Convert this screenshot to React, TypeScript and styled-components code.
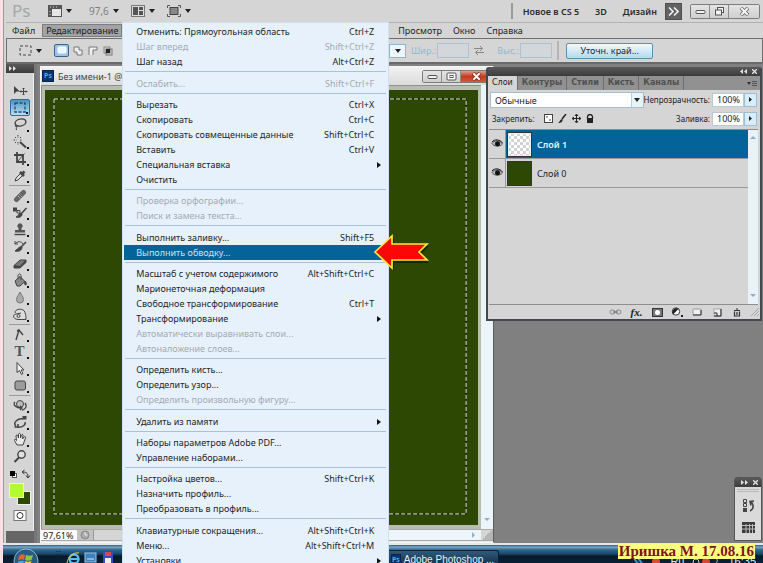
import React from 'react';
import styled, { createGlobalStyle, css } from 'styled-components';

const ui = '"Noto Sans", "DejaVu Sans Condensed", sans-serif';
const face = '#d5d5d5';
const green = '#2d4803';
const blue = '#046499';

const GlobalStyle = createGlobalStyle`
  * { box-sizing: border-box; }
  body { margin: 0; background: #fadfe5; }
  button, input, select { font: inherit; color: inherit; margin: 0; padding: 0; border: 0; background: none; border-radius: 0; }
  svg { display: block; flex: none; }
`;

const Page = styled.div`
  position: relative;
  display: flex;
  flex-direction: column;
  height: 100vh;
  padding-left: 3px;
  overflow: hidden;
  font: 9px/15px ${ui};
  color: #1c1c1c;
`;

const AppWindow = styled.div`
  flex: 1;
  min-height: 0;
  display: flex;
  flex-direction: column;
  border-left: 1px solid #9b9b9b;
  padding-left: 2px;
  background: ${face};
`;

/* ---------- application bar ---------- */

const AppBar = styled.header`
  flex: none;
  height: 23px;
  display: flex;
  align-items: center;
  justify-content: space-between;
  border-bottom: 1px solid #b2b2b2;
  padding: 0 3px 0 6px;
`;

const AppTools = styled.div`
  display: flex;
  align-items: center;
  gap: 12px;
`;

const Logo = styled.span`
  width: 24px;
  font: 17px/20px ${ui};
  color: #a6a6a6;
`;

const DropButton = styled.button`
  display: flex;
  align-items: center;
  gap: 4px;
  color: #808080;
  &::after {
    content: '';
    border: 3px solid transparent;
    border-top: 4px solid #222;
    border-bottom: 0;
  }
`;

const ZoomDrop = styled(DropButton)`
  margin-left: 5px;
  font-size: 10px;
`;

const Workspaces = styled.div`
  display: flex;
  align-items: center;
  height: 16px;
  border-left: 2px solid #9c9c9c;
  padding-left: 10px;
  gap: 16px;
`;

const WorkspaceButton = styled.button`
  font-weight: 600;
  color: #2b2b2b;
`;

const AppRight = styled.div`
  display: flex;
  align-items: center;
  gap: 8px;
`;

const MoreButton = styled.button`
  display: grid;
  place-items: center;
  width: 17px;
  height: 17px;
  background: #626262;
  border: 1px solid #4e4e4e;
`;

const WindowButtons = styled.div<{ $doc?: boolean }>`
  display: flex;
  height: ${p => (p.$doc ? 13 : 15)}px;
  border: 1px solid #7c7c7c;
  border-radius: 2px;
`;

const WindowButton = styled.button<{ $w: number; $close?: boolean }>`
  width: ${p => p.$w}px;
  display: grid;
  place-items: center;
  background: linear-gradient(#e4e4e4, #cfcfcf);
  & + & { border-left: 1px solid #8c8c8c; }
  ${p => p.$close && css`background: linear-gradient(#e39b8d, #c83a24 50%, #d7553b);`}
`;

/* ---------- menu bar ---------- */

const MenuBar = styled.nav`
  flex: none;
  display: flex;
  align-items: center;
  height: 15px;
  padding-left: 6px;
`;

const MenuButton = styled.button<{ $open?: boolean }>`
  line-height: 13px;
  ${p => p.$open && css`
    height: 13px;
    width: 80px;
    line-height: 11px;
    background: #a3a3a3;
    border: 1px solid #7d7d7d;
  `}
`;

const OpenMenu = styled.div`
  position: relative;
  margin-left: 7px;
`;

const MenuRest = styled.div`
  display: flex;
  gap: 11px;
  margin-left: 276px;
`;

const Menu = styled.ul`
  position: absolute;
  z-index: 5;
  left: 100%;
  top: -1px;
  width: 267px;
  margin: 0;
  padding: 1px 1px 12px;
  list-style: none;
  background: #e7f1fb;
  border: 1px solid #cfe2ef;
`;

const MenuRow = styled.li`
  position: relative;
`;

const MenuSeparator = styled.li<{ $wide?: boolean }>`
  height: ${p => (p.$wide ? 7 : 6)}px;
  padding-top: 2px;
  margin: 0 1px;
  &::before {
    content: '';
    display: block;
    border-top: 1px solid #a8c4d2;
  }
`;

const MenuItem = styled.button<{ $active?: boolean }>`
  display: flex;
  align-items: center;
  justify-content: space-between;
  width: 100%;
  height: 15px;
  padding: 0 13px 0 12px;
  line-height: 15px;
  color: #1d242b;
  white-space: nowrap;
  &:disabled { color: #a3abb3; }
  ${p => p.$active && css`
    background: ${blue};
    color: #c9e2f2;
  `}
`;

const SubmenuMark = styled.span`
  margin-right: -7px;
  border: 3px solid transparent;
  border-left: 4px solid #111;
  border-right: 0;
`;

const Pointer = styled.svg`
  position: absolute;
  z-index: 6;
  top: -11px;
  right: -43px;
  overflow: visible;
`;

/* ---------- options bar ---------- */

const OptionsBar = styled.div`
  flex: none;
  display: flex;
  align-items: center;
  height: 26px;
  border: 1px solid #6f6f6f;
  border-bottom: 2px solid #6a6a6a;
  padding: 0 12px;
`;

const ShapeModes = styled.div`
  display: flex;
  align-items: center;
  gap: 2px;
  margin-left: 12px;
`;

const ModeButton = styled.button<{ $on?: boolean }>`
  display: grid;
  place-items: center;
  width: 13px;
  height: 13px;
  ${p => p.$on && css`
    width: 15px;
    background: #9cc6e4;
    border: 1px solid #39658c;
    border-radius: 2px;
  `}
`;

const SizeOptions = styled.div`
  display: flex;
  align-items: center;
  margin-left: 275px;
  gap: 5px;
  color: #93b7d0;
`;

const StyleButton = styled.button`
  width: 17px;
  height: 14px;
  display: grid;
  place-items: center;
  background: #eef7fc;
  border: 1px solid #8db6cf;
`;

const SizeLabel = styled.label`
  display: flex;
  align-items: center;
  gap: 1px;
`;

const SizeInput = styled.input`
  width: 32px;
  height: 15px;
  border: 1px solid #a9c3d3;
  background: #d3d7da;
`;

const SwapButton = styled.button`
  margin-right: 8px;
`;

const RefineButton = styled.button`
  width: 87px;
  height: 16px;
  margin-left: 2px;
  line-height: 13px;
  color: #1c2730;
  background: linear-gradient(#f3fafd, #d3e9f5 50%, #b5d9ec);
  border: 1px solid #5c90af;
  border-radius: 2px;
`;

const OptionDivider = styled.span`
  width: 2px;
  height: 19px;
  background: #b4b4b4;
`;

/* ---------- workspace ---------- */

const Workspace = styled.main`
  position: relative;
  flex: 1;
  min-height: 0;
  display: flex;
  background: #808080;
`;

const ToolColumn = styled.aside`
  flex: none;
  width: 31px;
  display: flex;
  flex-direction: column;
  background: #666;
  border-right: 3px solid #777;
`;

const DarkHeader = styled.div<{ $end?: boolean }>`
  flex: none;
  display: flex;
  align-items: center;
  justify-content: ${p => (p.$end ? 'flex-end' : 'flex-start')};
  gap: 5px;
  height: 9px;
  padding: 0 3px;
  background: linear-gradient(#5a5a5a, #3b3b3b);
`;

const ToolList = styled.div`
  display: flex;
  flex-direction: column;
  align-items: center;
  padding: 9px 3px 7px;
  background: ${face};
  border-right: 1px solid #efefef;
`;

const ToolButton = styled.button<{ $on?: boolean }>`
  position: relative;
  display: grid;
  place-items: center;
  width: 20px;
  height: 17px;
  border-radius: 2px;
  color: #444;
  ${p => p.$on && css`
    background: linear-gradient(#4f93c4, #b9def2);
    border: 1px solid #2f6c9c;
  `}
`;

const Corner = styled.i`
  position: absolute;
  right: 1px;
  bottom: 1px;
  width: 2px;
  height: 2px;
  background: #111;
`;

const ToolDivider = styled.hr`
  width: 21px;
  margin: 1px 0;
  border: 0;
  border-top: 1px solid #9a9a9a;
`;

const DocWindow = styled.section`
  flex: 0 1 60%;
  min-width: 0;
  margin: 2px 0 0 3px;
  display: flex;
  flex-direction: column;
  background: #e6e6e6;
  border: 1px solid #f6f6f6;
  border-right: 1px solid #5c5c5c;
`;

const DocTitle = styled.div`
  flex: none;
  display: flex;
  align-items: center;
  justify-content: space-between;
  height: 18px;
  padding: 0 0 0 1px;
  background: linear-gradient(#f1f1f1, #dcdcdc);
`;

const DocName = styled.div`
  display: flex;
  align-items: center;
  gap: 4px;
  color: #444;
`;

const PsBadge = styled.span`
  display: grid;
  place-items: center;
  width: 12px;
  height: 12px;
  font: 600 7px/10px ${ui};
  color: #5ab4ee;
  background: #07356f;
  border: 1px solid #0a2347;
`;

const DocBody = styled.div`
  flex: 1;
  min-height: 0;
  display: flex;
`;

const CanvasFrame = styled.div`
  flex: 1;
  display: flex;
  padding: 4px 3px 4px;
  background: #b9bdb1;
  border: 1px solid #8f928a;
  border-width: 1px 0 0 1px;
`;

const Canvas = styled.div`
  flex: 1;
  padding: 8px 11px 10px 8px;
  background: ${green};
`;

const Selection = styled.svg`
  width: 100%;
  height: 100%;
`;

const VerticalScroll = styled.div`
  width: 12px;
  display: flex;
  flex-direction: column;
  justify-content: flex-end;
  align-items: center;
  padding-bottom: 6px;
  background: #ecf5fa;
`;

const StatusBar = styled.div`
  flex: none;
  display: flex;
  align-items: stretch;
  height: 12px;
  margin-bottom: 1px;
  background: ${face};
  border: 1px solid #a9a9a9;
  border-width: 1px 0;
`;

const ZoomInput = styled.input`
  width: 36px;
  padding-left: 2px;
  font-size: 9px;
  background: #fff;
`;

const StatusButton = styled.button`
  display: grid;
  place-items: center;
  width: 17px;
  background: #c2c2c2;
  border-right: 1px solid #999;
`;

const HorizontalScroll = styled.div`
  flex: 1;
  display: flex;
  align-items: center;
  justify-content: flex-end;
  padding-right: 4px;
  background: linear-gradient(90deg, ${face} 30%, #ecf5fa 30%);
`;

const Grip = styled.div`
  width: 12px;
  background: linear-gradient(135deg, ${face} 50%, #b5b5b5 50%);
`;

/* ---------- layers panel ---------- */

const LayersPanel = styled.section`
  position: absolute;
  z-index: 2;
  top: 3px;
  right: 1px;
  width: 276px;
  height: 254px;
  display: flex;
  flex-direction: column;
  background: ${face};
  border: 2px solid #42484e;
  border-top: 0;
  border-radius: 3px 3px 0 0;
`;

const Tabs = styled.div`
  flex: none;
  display: flex;
  align-items: stretch;
  height: 14px;
  background: #919191;
`;

const Tab = styled.button<{ $on?: boolean }>`
  padding: 0 4px;
  font: bold 8px/14px "DejaVu Sans", sans-serif;
  color: #505050;
  border-right: 1px solid #6e6e6e;
  ${p => p.$on && css`
    font-weight: normal;
    background: ${face};
    color: #222;
  `}
`;

const PanelMenu = styled.button`
  margin: 0 3px 0 auto;
`;

const PanelRow = styled.div`
  flex: none;
  display: flex;
  align-items: center;
  justify-content: space-between;
  height: 19px;
  padding: 0 3px 0 2px;
  font-size: 8px;
`;

const BlendSelect = styled.div`
  position: relative;
  flex: 0 1 155px;
  height: 16px;
  display: flex;
  background: #fff;
  border: 1px solid #a5bfce;
`;

const SelectBox = styled.select`
  flex: 1;
  min-width: 0;
  appearance: none;
  padding-left: 4px;
  font-size: 9px;
`;

const SelectMark = styled.span`
  display: grid;
  place-items: center;
  width: 12px;
  background: #e6f3fa;
  border-left: 1px solid #b5d0df;
`;

const Percent = styled.label`
  display: flex;
  align-items: center;
  gap: 2px;
  white-space: nowrap;
`;

const PercentInput = styled.input`
  width: 32px;
  height: 14px;
  padding-left: 4px;
  font-size: 9px;
  background: #fff;
  border: 1px solid #b9c9d3;
`;

const PercentButton = styled.button`
  display: grid;
  place-items: center;
  width: 13px;
  height: 14px;
  margin-left: -2px;
  background: #d9edf8;
  border: 1px solid #9cc0d5;
`;

const Locks = styled.div`
  display: flex;
  align-items: center;
  gap: 5px;
  padding-left: 2px;
`;

const LockLabel = styled.span`
  margin-right: 4px;
`;

const LayerArea = styled.div`
  flex: 1;
  display: flex;
  margin: 1px 2px 0 1px;
  border: 1px solid #8d8d8d;
  border-width: 1px 0;
`;

const LayerList = styled.div`
  flex: 1;
`;

const LayerRow = styled.div`
  display: flex;
  align-items: stretch;
  height: 29px;
  border-bottom: 1px solid #999;
  color: #222;
`;

const EyeButton = styled.button`
  display: grid;
  place-items: center;
  width: 17px;
  border-right: 1px solid #999;
`;

const LayerButton = styled.button<{ $on?: boolean }>`
  flex: 1;
  display: flex;
  align-items: center;
  gap: 5px;
  padding-left: 1px;
  ${p => p.$on && css`
    background: ${blue};
    color: #e9f5fc;
    font-weight: 600;
  `}
`;

const Thumb = styled.span<{ $checker?: boolean }>`
  width: 25px;
  height: 25px;
  border: 1px solid #333;
  background: ${green};
  ${p => p.$checker && css`
    background: repeating-conic-gradient(#d3d3d3 0 25%, #fff 0 50%) 0 0 / 6px 6px;
    outline: 1px solid #e8f1f6;
    outline-offset: -2px;
  `}
`;

const LayerScroll = styled.div`
  width: 10px;
  display: flex;
  flex-direction: column;
  justify-content: space-between;
  align-items: center;
  padding: 5px 0;
  background: #e9f2f7;
`;

const PanelFooter = styled.div`
  flex: none;
  display: flex;
  align-items: center;
  justify-content: flex-end;
  gap: 8px;
  height: 14px;
  padding-right: 1px;
`;

const IconButton = styled.button`
  display: grid;
  place-items: center;
  min-width: 12px;
`;

const FxButton = styled(IconButton)`
  width: 13px;
  font: italic bold 11px/12px "Liberation Serif", serif;
`;

/* ---------- collapsed panel ---------- */

const IconDock = styled.aside`
  position: absolute;
  right: 1px;
  bottom: 2px;
  width: 28px;
  display: flex;
  flex-direction: column;
  background: #dadada;
  border: 1px solid #555;
  border-radius: 3px 3px 0 0;
`;

const DockIcons = styled.div`
  display: flex;
  flex-direction: column;
  align-items: center;
  gap: 10px;
  margin: 2px;
  padding: 7px 0 5px;
  border-top: 3px double #b8b8b8;
`;

/* ---------- task bar ---------- */

const TaskBar = styled.footer`
  flex: none;
  display: flex;
  align-items: flex-start;
  height: 20px;
  padding-left: 10px;
  border-top: 2px solid #e5e7e8;
  background: linear-gradient(#2b5876, #7aa8c6 2px, #2f648a 5px, #1c4767 9px, #071a2c 11px, #0a2136);
`;

const StartButton = styled.button`
  width: 26px;
  height: 26px;
  margin-top: 3px;
`;

const QuickLaunch = styled.div`
  display: flex;
  gap: 4px;
  margin: 6px 0 0 16px;
`;

const TaskButton = styled.button`
  display: flex;
  align-items: center;
  gap: 3px;
  width: 113px;
  height: 15px;
  margin: 5px 0 0 272px;
  padding: 4px 4px 0;
  font: 10px/14px "Liberation Sans", sans-serif;
  color: #e4eef5;
  white-space: nowrap;
  background: linear-gradient(#31597a, #12314c);
  border: 1px solid #0b2136;
  border-bottom: 0;
  border-radius: 3px 3px 0 0;
`;

const Tray = styled.div`
  display: flex;
  gap: 7px;
  margin: 9px 7px 0 auto;
  font: 11px/14px "Liberation Sans", sans-serif;
  color: #dfe9f0;
`;

const Caption = styled.p`
  position: absolute;
  z-index: 7;
  right: 8px;
  bottom: 4px;
  margin: 0;
  padding: 0 1px;
  font: bold 15px/15px "Liberation Serif", serif;
  color: #7b1420;
  background: #ffff80;
`;

/* ---------- drawings ---------- */

const Icon = ({ w = 16, h = 15, children }: { w?: number; h?: number; children: React.ReactNode }) => (
  <svg width={w} height={h} viewBox={`0 0 ${w} ${h}`} fill="none" stroke="currentColor" aria-hidden="true">
    {children}
  </svg>
);

const Caret = () => <Icon w={6} h={4}><path d="M0 0h6L3 4z" fill="#222" stroke="none" /></Icon>;
const SideCaret = () => <Icon w={3} h={5}><path d="M0 0l3 2.5L0 5z" fill="#222" stroke="none" /></Icon>;
const Chevron = ({ d }: { d: string }) => <Icon w={6} h={6}><path d={d} fill="#8fb0c6" stroke="none" /></Icon>;
const DoubleArrow = ({ left }: { left?: boolean }) => (
  <Icon w={7} h={5}>
    <path d={left ? 'M3 0v5L0 2.5zM7 0v5L4 2.5z' : 'M0 0v5l3-2.5zM4 0v5l3-2.5z'} fill="#e4e4e4" stroke="none" />
  </Icon>
);
const SmallCross = () => <Icon w={5} h={5}><path d="M0 0l5 5M5 0L0 5" stroke="#e4e4e4" strokeWidth="1.3" /></Icon>;

const MinIcon = () => <Icon w={11} h={7}><rect x="1" y="2.5" width="9" height="3" rx="1" fill="#f2f2f2" stroke="#555" /></Icon>;
const RestoreIcon = () => (
  <Icon w={11} h={9}>
    <rect x="3.5" y=".5" width="6" height="5" fill="#f2f2f2" stroke="#555" />
    <rect x="1.5" y="3" width="6" height="5" fill="#f2f2f2" stroke="#555" />
  </Icon>
);
const MaxIcon = () => (
  <Icon w={11} h={9}>
    <rect x="1" y="1" width="9" height="7" rx="1" fill="#f6f6f6" stroke="#555" />
    <rect x="4" y="3.5" width="3" height="2" stroke="#555" />
  </Icon>
);
const CloseIcon = ({ light }: { light?: boolean }) => (
  <Icon w={11} h={9}>
    <path d="M2 1l7 7M9 1L2 8" stroke={light ? '#7b2a1e' : '#666'} strokeWidth="3.6" />
    <path d="M2.3 1.3l6.4 6.4M8.7 1.3L2.3 7.7" stroke="#f7f7f7" strokeWidth="2" />
  </Icon>
);

const toolIcons: Record<string, React.ReactNode> = {
  'Перемещение': <><path d="M2 3v8l2.500-2.500H8z" fill="currentColor" stroke="none" /><path d="M11.500 5v7M8 8.500h7M10.500 6l1-1 1 1M10.500 11l1 1 1-1M9 7.500l-1 1 1 1M14 7.500l1 1-1 1" /></>,
  'Прямоугольная область': <rect x="3" y="3" width="10" height="9" strokeDasharray="3 1.500" stroke="#1d4d73" strokeWidth="1.300" />,
  'Лассо': <><ellipse cx="8.500" cy="5.500" rx="5.500" ry="3.500" transform="rotate(-12 8.500 5.500)" strokeWidth="1.400" /><path d="M4 8c-2 1 0 2.500 1 1.500S3.500 11 4.500 13" /></>,
  'Волшебная палочка': <><path d="M8 8l6 5.500" strokeWidth="2" /><path d="M6 1v3M6 8v3M1.500 6h3M8 6h2.500M3 3l1.500 1.500M9 3L7.500 4.500M3 9l1.500-1.500" strokeDasharray="1.500 1" /></>,
  'Рамка': <><path d="M5 1v10h9M2 4h9v10" strokeWidth="1.800" /><path d="M5.500 10.500l7-8" /></>,
  'Пипетка': <><path d="M3 13l1-3 5-5 2 2-5 5z" fill="#ddd" /><path d="M8 4l4 4M10 6l2.500-2.500" strokeWidth="2.600" /></>,
  'Восстанавливающая кисть': <><path d="M4.500 11.500l7-7" strokeWidth="5" strokeLinecap="round" stroke="#666" /><path d="M6 8l3 3M7.500 6.500l3 3" stroke="#ccc" strokeDasharray="1 1" /></>,
  'Кисть': <><rect x="1.500" y="3" width="3" height="3" fill="currentColor" /><path d="M5 5.500h3v2.500H5z" /><path d="M9 9l5.500-6" strokeWidth="1.600" /><path d="M4 12c3 1 6 0 6-3-2-1.500-3 0-3.500 1S5 11.500 4 12z" fill="currentColor" /></>,
  'Штамп': <><path d="M6.500 8V6a2.500 2.500 0 1 1 3 0v2H13v2.500H3V8z" fill="#555" stroke="none" /><path d="M2.500 12.500h11" strokeWidth="1.400" /></>,
  'Архивная кисть': <><path d="M3 5c2-3 7-3 8 0M3 2v3h3" /><path d="M9 8l5-5" strokeWidth="1.600" /><path d="M3 12c3 1 7 0 7-4-3-1-4 2-7 4z" fill="currentColor" /></>,
  'Ластик': <><path d="M2 9.500L8 4h6l-5.500 6.500z" fill="#777" /><path d="M2 9.500V12h6l6-5.500V4L8.500 10.500H2" fill="#444" /></>,
  'Заливка': <><path d="M3 8l5-4.500 5 5L8 13H5z" fill="#888" /><path d="M6 6V2.500c0-2 3-2 3 0V7" /><path d="M13 8c2 2 1.500 4 .500 4s-1-2-.500-4z" fill="currentColor" /></>,
  'Размытие': <path d="M8 2c1 3 3.500 4.500 3.500 7.500a3.500 3.500 0 0 1-7 0C4.500 6.500 7 5 8 2z" fill="#aaa" stroke="#777" />,
  'Губка': <><path d="M3 6c0-5 9-5 10-.500 1 3 1 5 1 7H6C1 12 0 8 4 7l5-1" fill="#ddd" /><circle cx="6.500" cy="9" r="1.500" /></>,
  'Перо': <path d="M4 13L7 3l4 5M7 3l-2 1" strokeWidth="1.400" />,
  'Контур': <path d="M5 1.500v10l2.500-2 2 4 1.500-1-2-3.500h3z" fill="#eee" />,
  'Прямоугольник': <rect x="3" y="3" width="10.500" height="9" rx="2" fill="#9c9c9c" />,
  '3D-вращение': <><circle cx="8" cy="6" r="3.500" fill="#bbb" /><path d="M3 4c-3 3 2 6 6 6M13 5c3 4-1 7-3 7M8 8l2 2-2 2" strokeWidth="1.300" /></>,
  '3D-камера': <><path d="M4 11C0 8 6 3 11 4M5 12c5 1 9-2 8-5M2.500 12H6V9" strokeWidth="1.500" /><rect x="11" y="1.500" width="3" height="2.500" fill="currentColor" /></>,
  'Рука': <path d="M5 13L2.500 8.500c-.500-1.500 1-1.500 2 0L4 4c0-1.500 1.500-1.500 2 0l.5 2V2.500c0-1.500 1.700-1.500 2 0V6l1-3c.5-1 2-.700 1.500 1L10.500 7l1.500-2c1-1 2 0 1.500 1L11 13z" fill="#e8e8e8" />,
  'Масштаб': <><circle cx="9.500" cy="5.500" r="3.700" fill="#e0e0e0" strokeWidth="1.400" /><path d="M7 8.500L2.500 13" strokeWidth="2" /></>,
};

const ToolLetter = styled.span`
  font: bold 15px/17px "Liberation Serif", serif;
  color: #555;
`;

const toolGroups: string[][] = [
  ['Перемещение', 'Прямоугольная область', 'Лассо', 'Волшебная палочка', 'Рамка', 'Пипетка'],
  ['Восстанавливающая кисть', 'Кисть', 'Штамп', 'Архивная кисть', 'Ластик', 'Заливка', 'Размытие', 'Губка'],
  ['Перо', 'Текст', 'Контур', 'Прямоугольник'],
  ['3D-вращение', '3D-камера', 'Рука', 'Масштаб'],
];

type Entry = { text: string; keys?: string; off?: boolean; sub?: boolean; active?: boolean };

const menuGroups: Entry[][] = [
  [
    { text: 'Отменить: Прямоугольная область', keys: 'Ctrl+Z' },
    { text: 'Шаг вперед', keys: 'Shift+Ctrl+Z', off: true },
    { text: 'Шаг назад', keys: 'Alt+Ctrl+Z' },
  ],
  [{ text: 'Ослабить...', keys: 'Shift+Ctrl+F', off: true }],
  [
    { text: 'Вырезать', keys: 'Ctrl+X' },
    { text: 'Скопировать', keys: 'Ctrl+C' },
    { text: 'Скопировать совмещенные данные', keys: 'Shift+Ctrl+C' },
    { text: 'Вставить', keys: 'Ctrl+V' },
    { text: 'Специальная вставка', sub: true },
    { text: 'Очистить' },
  ],
  [
    { text: 'Проверка орфографии...', off: true },
    { text: 'Поиск и замена текста...', off: true },
  ],
  [
    { text: 'Выполнить заливку...', keys: 'Shift+F5' },
    { text: 'Выполнить обводку...', active: true },
  ],
  [
    { text: 'Масштаб с учетом содержимого', keys: 'Alt+Shift+Ctrl+C' },
    { text: 'Марионеточная деформация' },
    { text: 'Свободное трансформирование', keys: 'Ctrl+T' },
    { text: 'Трансформирование', sub: true },
    { text: 'Автоматически выравнивать слои...', off: true },
    { text: 'Автоналожение слоев...', off: true },
  ],
  [
    { text: 'Определить кисть...' },
    { text: 'Определить узор...' },
    { text: 'Определить произвольную фигуру...', off: true },
  ],
  [{ text: 'Удалить из памяти', sub: true }],
  [{ text: 'Наборы параметров Adobe PDF...' }, { text: 'Управление наборами...' }],
  [
    { text: 'Настройка цветов...', keys: 'Shift+Ctrl+K' },
    { text: 'Назначить профиль...' },
    { text: 'Преобразовать в профиль...' },
  ],
  [
    { text: 'Клавиатурные сокращения...', keys: 'Alt+Shift+Ctrl+K' },
    { text: 'Меню...', keys: 'Alt+Shift+Ctrl+M' },
    { text: 'Установки', sub: true },
  ],
];

const EditMenu = () => (
  <Menu role="menu">
    {menuGroups.map((group, g) => (
      <React.Fragment key={g}>
        {g > 0 && <MenuSeparator role="separator" $wide={g % 3 === 1} />}
        {group.map(item => (
          <MenuRow key={item.text} role="none">
            <MenuItem role="menuitem" disabled={item.off} $active={item.active}>
              <span>{item.text}</span>
              {item.keys && <span>{item.keys}</span>}
              {item.sub && <SubmenuMark />}
            </MenuItem>
            {item.active && (
              <Pointer width="56" height="36" viewBox="0 0 56 36" aria-hidden="true">
                <path d="M3 20L20 4v8h35l-8 8 8 9H20v8z" fill="#000" opacity=".45" />
                <path d="M1 18L18 2v8h35l-8 8 8 8H18v8z" fill="#fb0707" stroke="#ffe934" strokeWidth="1.700" />
              </Pointer>
            )}
          </MenuRow>
        ))}
      </React.Fragment>
    ))}
  </Menu>
);

const Tools = () => (
  <ToolColumn>
    <DarkHeader><DoubleArrow /></DarkHeader>
    <ToolList>
      {toolGroups.map((group, g) => (
        <React.Fragment key={g}>
          {g > 0 && <ToolDivider />}
          {group.map(name => (
            <ToolButton key={name} aria-label={name} $on={name === 'Прямоугольная область'}>
              {name === 'Текст' ? <ToolLetter>T</ToolLetter> : <Icon>{toolIcons[name]}</Icon>}
              {name !== 'Перемещение' && name !== 'Масштаб' && <Corner />}
            </ToolButton>
          ))}
        </React.Fragment>
      ))}
      <Icon w={22} h={42}>
        <rect x="3.500" y="8.500" width="4" height="4" fill="#fff" stroke="#555" />
        <rect x="1" y="6" width="5" height="5" fill="#000" stroke="none" />
        <path d="M14 7c4 0 5 2 5 5M15.500 5L13 7l2.500 2M17 10.500l2 2.500 2-2.500" stroke="#333" />
        <rect x="8.500" y="26.500" width="13" height="13" fill={green} stroke="#f0f0f0" />
        <rect x=".5" y="18.500" width="14" height="14" fill="#b2fb33" stroke="#f0f0f0" />
      </Icon>
      <ToolButton aria-label="Быстрая маска">
        <Icon w={14} h={11}>
          <rect x="1" y=".5" width="12" height="10" fill="#fafafa" stroke="#777" />
          <circle cx="7" cy="5.500" r="3" fill="#fff" stroke="#333" />
        </Icon>
      </ToolButton>
    </ToolList>
  </ToolColumn>
);

const PercentField = ({ id, label }: { id: string; label: string }) => (
  <Percent htmlFor={id}>
    {label}
    <PercentInput id={id} defaultValue="100%" />
    <PercentButton aria-label={label}><SideCaret /></PercentButton>
  </Percent>
);

const Eye = () => (
  <Icon w={12} h={10}>
    <path d="M1 4.500C3 1 9 .500 11.500 5 9 8 3 8 1 4.500z" fill="#bbb" stroke="#555" />
    <circle cx="6.500" cy="4.700" r="2.500" fill="#111" stroke="none" />
    <path d="M1 3c2-3 8-3 10.500 1" stroke="#222" />
  </Icon>
);

const Layers = () => (
  <LayersPanel>
    <DarkHeader $end><DoubleArrow left /><SmallCross /></DarkHeader>
    <Tabs>
      {['Слои', 'Контуры', 'Стили', 'Кисть', 'Каналы'].map((t, i) => <Tab key={t} $on={i === 0}>{t}</Tab>)}
      <PanelMenu aria-label="Меню панели">
        <Icon w={10} h={7}><path d="M0 2h4L2 5z" fill="#333" stroke="none" /><path d="M5 1.500h5M5 3.500h5M5 5.500h5" stroke="#555" /></Icon>
      </PanelMenu>
    </Tabs>
    <PanelRow>
      <BlendSelect>
        <SelectBox aria-label="Режим наложения"><option>Обычные</option></SelectBox>
        <SelectMark><Caret /></SelectMark>
      </BlendSelect>
      <PercentField id="opacity" label="Непрозрачность:" />
    </PanelRow>
    <PanelRow>
      <Locks>
        <LockLabel>Закрепить:</LockLabel>
        <Icon w={9} h={9}><rect x=".5" y=".5" width="8" height="8" fill="#fff" stroke="#444" /><path d="M2 2h2v2H2zM5 5h2v2H5z" fill="#aaa" stroke="none" /></Icon>
        <Icon w={9} h={9}><path d="M4 5l4-5" stroke="#222" strokeWidth="1.500" /><path d="M0 9c3 0 5-1 4.500-4C2 5 2 8 0 9z" fill="#222" stroke="none" /></Icon>
        <Icon w={9} h={9}><path d="M4.500 1v7M1 4.500h7M3 2l1.500-2L6 2M3 7l1.500 2L6 7M2 3L0 4.500 2 6M7 3l2 1.500L7 6" stroke="#222" /></Icon>
        <Icon w={8} h={9}><path d="M1.500 5V3a2.500 2.500 0 0 1 5 0v2" stroke="#222" strokeWidth="1.300" /><rect x="1" y="4" width="6" height="5" fill="#222" stroke="none" /></Icon>
      </Locks>
      <PercentField id="fill" label="Заливка:" />
    </PanelRow>
    <LayerArea>
      <LayerList>
        <LayerRow>
          <EyeButton aria-label="Видимость слоя 1"><Eye /></EyeButton>
          <LayerButton $on><Thumb $checker />Слой 1</LayerButton>
        </LayerRow>
        <LayerRow>
          <EyeButton aria-label="Видимость слоя 0"><Eye /></EyeButton>
          <LayerButton><Thumb />Слой 0</LayerButton>
        </LayerRow>
      </LayerList>
      <LayerScroll>
        <Chevron d="M0 4l3-3 3 3z" />
        <Chevron d="M0 1l3 3 3-3z" />
      </LayerScroll>
    </LayerArea>
    <PanelFooter>
      <IconButton aria-label="Связать"><Icon w={13} h={8}><rect x="1" y="2" width="5" height="4" rx="2" stroke="#888" /><rect x="7" y="2" width="5" height="4" rx="2" stroke="#888" /><path d="M4 4h5" stroke="#666" /></Icon></IconButton>
      <FxButton>fx.</FxButton>
      <IconButton aria-label="Маска"><Icon w={11} h={9}><rect x=".5" y=".5" width="10" height="8" fill="#777" stroke="#333" /><circle cx="5.500" cy="4.500" r="2.500" fill="#fff" stroke="none" /></Icon></IconButton>
      <IconButton aria-label="Корректирующий слой"><Icon w={12} h={10}><circle cx="5" cy="4.500" r="3.700" fill="#fff" stroke="#333" /><path d="M2 7.500A4 4 0 0 1 7.500 2z" fill="#222" stroke="none" /><path d="M10 8h2v2h-2z" fill="#222" stroke="none" /></Icon></IconButton>
      <IconButton aria-label="Группа"><Icon w={10} h={8}><rect x="1" y="1" width="8" height="6" rx="1" fill="#eee" stroke="#999" /><path d="M1 7h8V2" stroke="#333" /></Icon></IconButton>
      <IconButton aria-label="Новый слой"><Icon w={9} h={9}><rect x="1" y="1" width="7" height="7" fill="#eee" stroke="#aaa" /><path d="M1 8h7V1M1 5h3v3" stroke="#222" /></Icon></IconButton>
      <IconButton aria-label="Удалить слой"><Icon w={8} h={9}><path d="M1 2.500h6M3 1h2M1.500 3.500V8h5V3.500M4 4v3" stroke="#333" strokeWidth="1.200" /></Icon></IconButton>
      <Icon w={8} h={8}><path d="M0 8l8-8M3 8l5-5M6 8l2-2" stroke="#aaa" /></Icon>
    </PanelFooter>
  </LayersPanel>
);

const modeIcons = [
  <rect x="1" y="1" width="8" height="6" rx="1" fill="#eaf5fc" stroke="#fff" />,
  <path d="M1 1h5v3h3v5H4V6H1z" fill="#eee" stroke="#777" />,
  <path d="M1 9V1h8v3H5v5" fill="#eee" stroke="#777" />,
  <><rect x="1" y="1" width="6" height="6" stroke="#888" /><rect x="3" y="3" width="6" height="6" stroke="#777" /><rect x="3" y="3" width="4" height="4" fill="#222" stroke="none" /></>,
];

export default function App() {
  return (
    <Page>
      <GlobalStyle />
      <AppWindow>
        <AppBar>
          <AppTools>
            <Logo>Ps</Logo>
            <DropButton aria-label="Bridge">
              <Icon w={14} h={12}><rect x=".5" y=".5" width="13" height="11" fill="#e5e5e5" stroke="#555" /><path d="M0 0h14v4H4v8H0z" fill="#555" stroke="none" /><path d="M2 2h1M5 2h1M8 2h1M2 6v1M2 9v1" stroke="#ddd" /></Icon>
            </DropButton>
            <ZoomDrop>97,6</ZoomDrop>
            <DropButton aria-label="Расположение документов">
              <Icon w={14} h={12}><rect x=".5" y=".5" width="13" height="11" fill="#ddd" stroke="#777" /><path d="M2 2h5v8H2zM8 2h4v3H8zM8 6h4v4H8z" fill="#555" stroke="none" /></Icon>
            </DropButton>
            <DropButton aria-label="Режим экрана">
              <Icon w={14} h={12}><rect x="3" y="2.500" width="8" height="7" fill="#888" stroke="#444" /><path d="M.5 3V.5H3M11 .5h2.500V3M.5 9v2.500H3M11 11.500h2.500V9" stroke="#555" /></Icon>
            </DropButton>
          </AppTools>
          <AppRight>
            <Workspaces>
              {['Новое в CS 5', '3D', 'Дизайн'].map(w => <WorkspaceButton key={w}>{w}</WorkspaceButton>)}
            </Workspaces>
            <MoreButton aria-label="Еще">
              <Icon w={11} h={9}><path d="M1 .5l4 4-4 4M6 .5l4 4-4 4" stroke="#f2f2f2" strokeWidth="1.600" /></Icon>
            </MoreButton>
            <WindowButtons>
              <WindowButton $w={18} aria-label="Свернуть"><MinIcon /></WindowButton>
              <WindowButton $w={19} aria-label="Восстановить"><RestoreIcon /></WindowButton>
              <WindowButton $w={31} aria-label="Закрыть"><CloseIcon /></WindowButton>
            </WindowButtons>
          </AppRight>
        </AppBar>
        <MenuBar>
          <MenuButton>Файл</MenuButton>
          <OpenMenu>
            <MenuButton $open aria-expanded="true">Редактирование</MenuButton>
            <EditMenu />
          </OpenMenu>
          <MenuRest>
            {['Просмотр', 'Окно', 'Справка'].map(m => <MenuButton key={m}>{m}</MenuButton>)}
          </MenuRest>
        </MenuBar>
        <OptionsBar>
          <DropButton aria-label="Инструмент">
            <Icon w={13} h={11}><rect x="1" y="1" width="11" height="9" strokeDasharray="3 2" stroke="#444" /></Icon>
          </DropButton>
          <ShapeModes>
            {modeIcons.map((icon, i) => (
              <ModeButton key={i} $on={i === 0} aria-label={`Режим выделения ${i + 1}`}><Icon w={10} h={10}>{icon}</Icon></ModeButton>
            ))}
          </ShapeModes>
          <SizeOptions>
            <StyleButton aria-label="Стиль"><Caret /></StyleButton>
            <SizeLabel htmlFor="w">Шир.:<SizeInput id="w" disabled /></SizeLabel>
            <SwapButton aria-label="Поменять местами">
              <Icon w={10} h={9}><path d="M0 2.500h8M6 0l2.500 2.500L6 5M10 6.500H2M4 4L1.500 6.500 4 9" stroke="#888" /></Icon>
            </SwapButton>
            <SizeLabel htmlFor="h">Выс.:<SizeInput id="h" disabled /></SizeLabel>
            <OptionDivider />
            <RefineButton>Уточн. край...</RefineButton>
          </SizeOptions>
        </OptionsBar>
        <Workspace>
          <Tools />
          <DocWindow>
            <DocTitle>
              <DocName><PsBadge>Ps</PsBadge>Без имени-1 @</DocName>
              <WindowButtons $doc>
                <WindowButton $w={18} aria-label="Свернуть документ"><MinIcon /></WindowButton>
                <WindowButton $w={19} aria-label="Развернуть документ"><MaxIcon /></WindowButton>
                <WindowButton $w={32} $close aria-label="Закрыть документ"><CloseIcon light /></WindowButton>
              </WindowButtons>
            </DocTitle>
            <DocBody>
              <CanvasFrame>
                <Canvas>
                  <Selection aria-hidden="true">
                    <rect x="1" y="1" width="99.500%" height="99.500%" fill="none" stroke="#111" />
                    <rect x="1" y="1" width="99.500%" height="99.500%" fill="none" stroke="#e6ecd8" strokeDasharray="4 2" />
                  </Selection>
                </Canvas>
              </CanvasFrame>
              <VerticalScroll><Chevron d="M0 1l3 3 3-3z" /></VerticalScroll>
            </DocBody>
            <StatusBar>
              <ZoomInput aria-label="Масштаб" defaultValue="97,61%" />
              <StatusButton aria-label="Сведения">
                <Icon w={10} h={10}><circle cx="5" cy="5" r="4" fill="#aaa" stroke="#888" /><path d="M5 2v3h2.500" stroke="#eee" /></Icon>
              </StatusButton>
              <HorizontalScroll><Chevron d="M1 0l3 3-3 3z" /></HorizontalScroll>
              <Grip />
            </StatusBar>
          </DocWindow>
          <Layers />
          <IconDock>
            <DarkHeader $end><DoubleArrow /><SmallCross /></DarkHeader>
            <DockIcons>
              <IconButton aria-label="История"><Icon w={13} h={13}><path d="M1.500.5h3v3h-3zM1.500 4.500h3v3h-3z" stroke="#444" /><path d="M1 9h4v4H1z" fill="#444" stroke="none" /><path d="M8 12c4-2 4-7 1-9M12 2L8 2.500l1 4" stroke="#444" strokeWidth="1.600" /></Icon></IconButton>
              <IconButton aria-label="Образцы"><Icon w={13} h={11}><path d="M0 0h13v11H0z" fill="#3c3c3c" stroke="none" /><path d="M0 3.500h13M0 7h13M4 2v9M7.500 2v9M10.500 2v9" stroke="#bbb" /></Icon></IconButton>
            </DockIcons>
          </IconDock>
        </Workspace>
      </AppWindow>
      <TaskBar>
        <StartButton aria-label="Пуск">
          <Icon w={26} h={26}>
            <circle cx="13" cy="13" r="12" fill="#295c82" stroke="#8bb6d0" />
            <path d="M6 8c2-2 4-2 6-1l-1 5c-2-1-4-1-6 1z" fill="#e8622c" stroke="none" />
            <path d="M13 7c2 1 5 1 7 0l-1.500 5c-2 1-4 1-6.500 0z" fill="#8fc63d" stroke="none" />
            <path d="M5 14c2-1.500 4-1.500 6-1l-1 5H4z" fill="#4aa5e0" stroke="none" />
            <path d="M12 13c2 1 4 1 6.500 0L17 18h-6z" fill="#f7c832" stroke="none" />
          </Icon>
        </StartButton>
        <QuickLaunch>
          <Icon w={7} h={14}><path d="M2 0v14M5 0v14" stroke="#0a2740" strokeDasharray="1 2" /></Icon>
          <Icon w={14} h={14}><circle cx="8" cy="8" r="4.500" stroke="#58bdf0" strokeWidth="2.400" /><path d="M4 8h8" stroke="#58bdf0" strokeWidth="2" /><path d="M1 12C2 5 8 1 13 2" stroke="#f0c64c" /></Icon>
          <Icon w={14} h={14}><rect x="1" y="2" width="11" height="9" fill="#3e81bf" stroke="#9cc7e6" /><path d="M3 8h7" stroke="#d5e9f7" /></Icon>
          <Icon w={12} h={14}><path d="M1 1h10v13H1z" fill="#3b4bc5" stroke="none" /><path d="M3 1h6v4H3z" fill="#d4475a" stroke="none" /><path d="M3 7h6v7H3z" fill="#eee" stroke="none" /></Icon>
        </QuickLaunch>
        <TaskButton><PsBadge>Ps</PsBadge>Adobe Photoshop ...</TaskButton>
        <Tray>
          <Icon w={12} h={12}><path d="M1 3l6 8M4 2l6 7" stroke="#3f93c9" strokeWidth="2" /></Icon>
          <Icon w={12} h={12}><circle cx="5" cy="8" r="4" fill="#d94c35" stroke="none" /></Icon>
          <span>Ru</span>
          <Icon w={30} h={12}><circle cx="5" cy="8" r="3" stroke="#ccc" /><circle cx="15" cy="8" r="4" fill="#d6453a" stroke="none" /><path d="M24 10c3-2 3-5 0-7" stroke="#ccc" /></Icon>
          <span>16:35</span>
        </Tray>
      </TaskBar>
      <Caption>Иришка М. 17.08.16</Caption>
    </Page>
  );
}
